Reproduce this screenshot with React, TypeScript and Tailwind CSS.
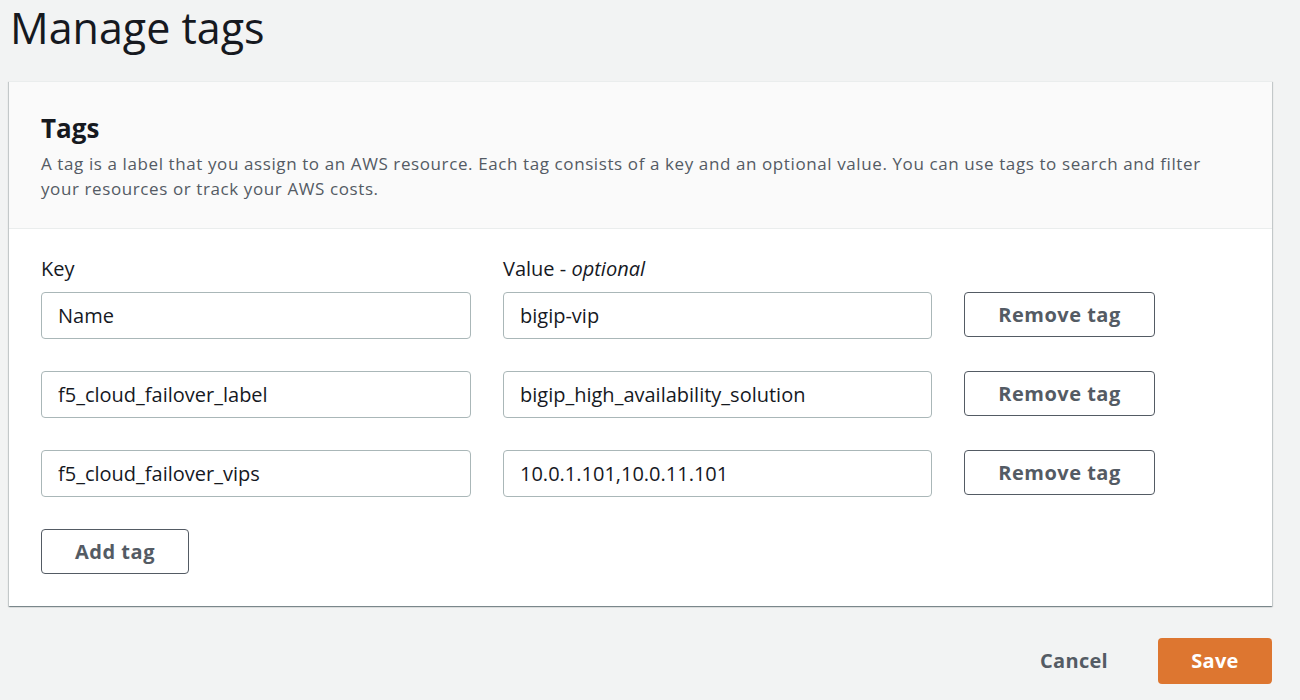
import React from 'react';

const tags = [
  { key: 'Name', value: 'bigip-vip' },
  { key: 'f5_cloud_failover_label', value: 'bigip_high_availability_solution' },
  { key: 'f5_cloud_failover_vips', value: '10.0.1.101,10.0.11.101' }
];

function TagRow({ tagKey, value }: { tagKey: string; value: string }) {
  return (
    <div className="flex items-start gap-8">
      <input
        readOnly
        value={tagKey}
        className="w-[430px] h-[47px] rounded-[4px] border border-[#aab7b8] bg-white px-[16px] text-[20px] text-[#16191f] outline-none"
      />
      <input
        readOnly
        value={value}
        className="w-[429px] h-[47px] rounded-[4px] border border-[#aab7b8] bg-white px-[16px] text-[20px] text-[#16191f] outline-none"
      />
      <button className="w-[191px] h-[45px] rounded-[4px] border border-[#545b64] bg-white text-[20px] tracking-[0.5px] font-bold text-[#545b64]">
        Remove tag
      </button>
    </div>
  );
}

export default function App() {
  return (
    <div
      className="min-h-[700px] bg-[#f2f3f3] pl-[9px] pr-[28px]"
      style={{ fontFamily: '"Open Sans", "Noto Sans", sans-serif' }}
    >
      {/* Page title */}
      <h1 className="pl-[1px] text-[43px] leading-[56px] font-normal text-[#16191f]">
        Manage tags
      </h1>

      {/* Card */}
      <div className="mt-[25px] w-[1263px] bg-white border-t border-[#eaeded] shadow-[0_1px_1px_0_rgba(0,28,36,0.3),1px_1px_1px_0_rgba(0,28,36,0.15),-1px_1px_1px_0_rgba(0,28,36,0.15)]">
        {/* Header */}
        <div className="bg-[#fafafa] border-b border-[#eaeded] pl-[32px] pr-[40px] pt-[33px] pb-[27px]">
          <h2 className="text-[26px] leading-none font-bold text-[#16191f]">Tags</h2>
          <p className="mt-[10px] text-[17px] tracking-[0.6px] leading-[25px] text-[#545b64]">
            A tag is a label that you assign to an AWS resource. Each tag consists of a key and an optional value. You can use tags to search and filter your resources or track your AWS costs.
          </p>
        </div>

        {/* Body */}
        <div className="pl-[32px] pt-[30px] pb-[32px]">
          <div className="flex gap-8 text-[20px] leading-none text-[#16191f]">
            <div className="w-[430px]">Key</div>
            <div>
              Value - <span className="italic">optional</span>
            </div>
          </div>
          <div className="mt-[13px] flex flex-col gap-8">
            {tags.map((t) => (
              <TagRow key={t.key} tagKey={t.key} value={t.value} />
            ))}
          </div>
          <button className="mt-[32px] w-[148px] h-[45px] rounded-[4px] border border-[#545b64] bg-white text-[20px] tracking-[0.5px] font-bold text-[#545b64]">
            Add tag
          </button>
        </div>
      </div>

      {/* Footer actions */}
      <div className="mt-[32px] w-[1263px] flex items-center justify-end gap-[32px]">
        <button className="h-[46px] px-[18px] text-[20px] tracking-[0.3px] font-bold text-[#545b64]">Cancel</button>
        <button className="w-[114px] h-[46px] rounded-[4px] bg-[#dd7630] text-[20px] tracking-[0.3px] font-bold text-white">
          Save
        </button>
      </div>
    </div>
  );
}
